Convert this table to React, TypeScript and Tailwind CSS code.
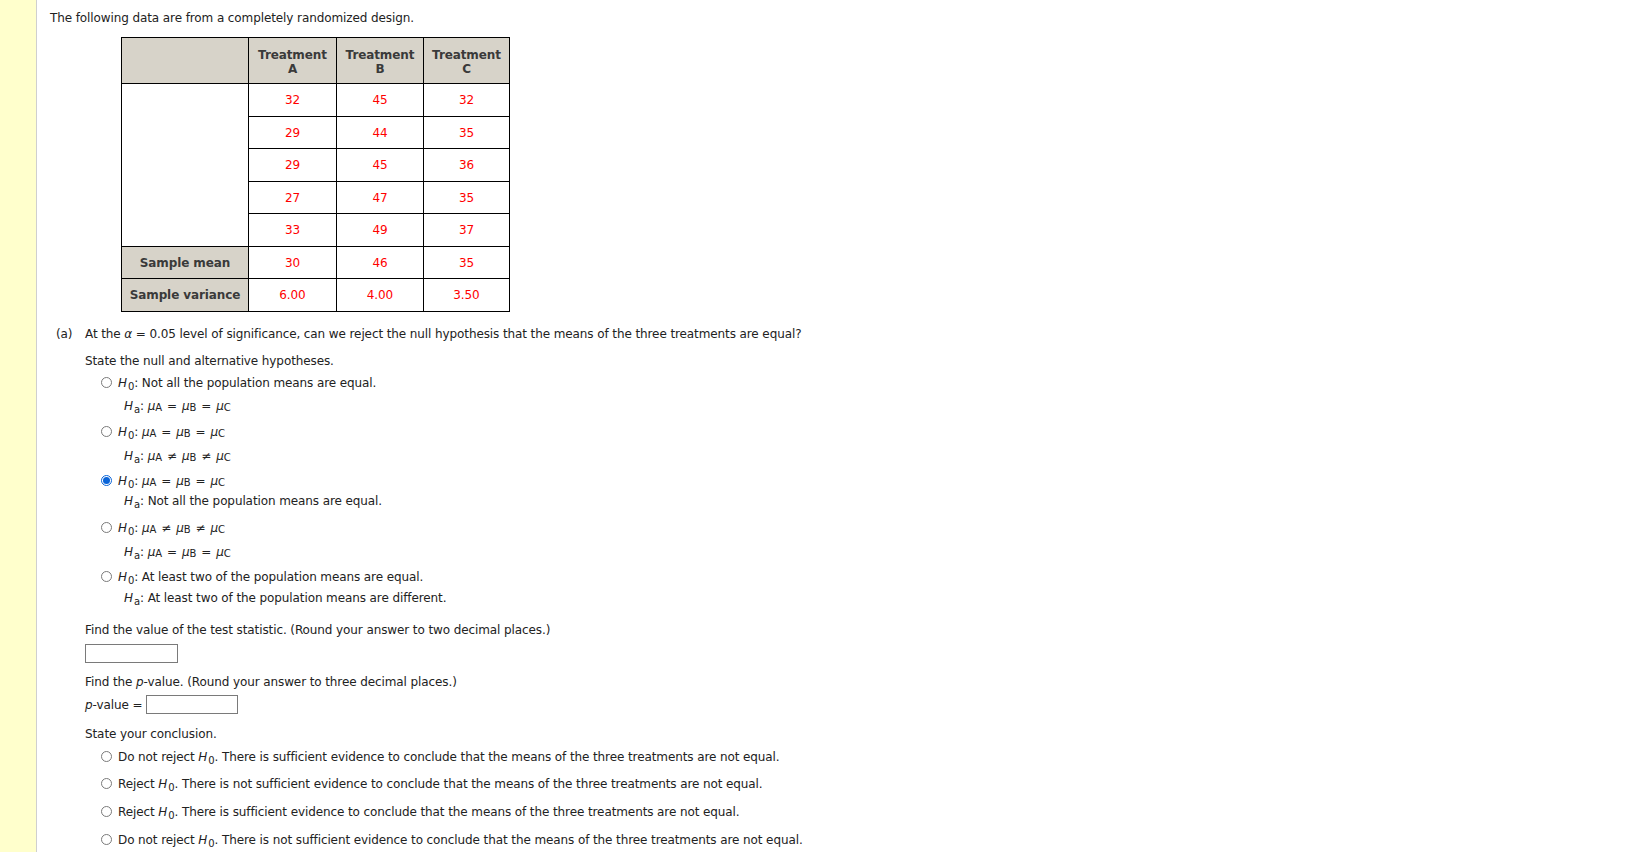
import React from 'react';

const font = { fontFamily: '"DejaVu Sans", Verdana, sans-serif' };

const rows = [
    ['32', '45', '32'],
    ['29', '44', '35'],
    ['29', '45', '36'],
    ['27', '47', '35'],
    ['33', '49', '37'],
];

function Radio({ checked = false }: { checked?: boolean }) {
    if (checked) {
        return (
            <span className="inline-flex h-[11px] w-[11px] shrink-0 items-center justify-center rounded-full border border-[#0a64d8] bg-white">
                <span className="h-[7px] w-[7px] rounded-full bg-[#0a64d8]" />
            </span>
        );
    }
    return <span className="inline-block h-[11px] w-[11px] shrink-0 rounded-full border border-[#7a7a7a] bg-white" />;
}

function H({ sub }: { sub: string }) {
    return (
        <span>
            <i>H</i>
            <sub className="relative top-[3px] ml-[1px] text-[10px]">{sub}</sub>
        </span>
    );
}

function Mu({ s }: { s: string }) {
    return (
        <span>
            <i>μ</i>
            <sub className="relative top-[1px] text-[10px]">{s}</sub>
        </span>
    );
}

function Eq({ neq = false }: { neq?: boolean }) {
    return <span className="mx-[5px]">{neq ? '≠' : '='}</span>;
}

function MuChain({ neq = false }: { neq?: boolean }) {
    return (
        <span>
            <Mu s="A" />
            <Eq neq={neq} />
            <Mu s="B" />
            <Eq neq={neq} />
            <Mu s="C" />
        </span>
    );
}

function Line({ className = '', children }: { className?: string; children: React.ReactNode }) {
    return <div className={`flex h-[20px] items-center whitespace-nowrap ${className}`}>{children}</div>;
}

export default function App() {
    return (
        <div className="flex min-h-[852px] bg-white text-[12px] tracking-[-0.1px] text-[#222]" style={font}>
            {/* yellow side strip */}
            <div className="w-[37px] shrink-0 border-r border-[#cfcfcf] bg-[#ffffcc]" />

            <div className="pl-[13px] pt-[8px]">
                <Line>The following data are from a completely randomized design.</Line>

                <table className="ml-[71px] mt-[9px] border-collapse text-center">
                    <thead>
                        <tr className="h-[46px] bg-[#d7d3c9] font-bold leading-[14px] text-[#3a3a3a]">
                            <th className="w-[127px] border border-black" />
                            <th className="w-[88px] border border-black pt-[2px]">Treatment<br />A</th>
                            <th className="w-[87px] border border-black pt-[2px]">Treatment<br />B</th>
                            <th className="w-[86px] border border-black pt-[2px]">Treatment<br />C</th>
                        </tr>
                    </thead>
                    <tbody>
                        {rows.map((r, i) => (
                            <tr key={i} className="h-[32.5px] text-[#ff0000]">
                                {i === 0 && <td rowSpan={5} className="border border-black bg-white" />}
                                {r.map((v, j) => (
                                    <td key={j} className="border border-black pt-[1px]">{v}</td>
                                ))}
                            </tr>
                        ))}
                        <tr className="h-[32.5px]">
                            <td className="border border-black bg-[#d7d3c9] pt-[1px] font-bold text-[#3a3a3a]">Sample mean</td>
                            <td className="border border-black pt-[1px] text-[#ff0000]">30</td>
                            <td className="border border-black pt-[1px] text-[#ff0000]">46</td>
                            <td className="border border-black pt-[1px] text-[#ff0000]">35</td>
                        </tr>
                        <tr className="h-[32.5px]">
                            <td className="border border-black bg-[#d7d3c9] pt-[1px] font-bold text-[#3a3a3a]">Sample variance</td>
                            <td className="border border-black pt-[1px] text-[#ff0000]">6.00</td>
                            <td className="border border-black pt-[1px] text-[#ff0000]">4.00</td>
                            <td className="border border-black pt-[1px] text-[#ff0000]">3.50</td>
                        </tr>
                    </tbody>
                </table>

                <Line className="mt-[12px] pl-[6px]">
                    <span className="w-[29px]">(a)</span>
                    <span>
                        At the <i>α</i> = 0.05 level of significance, can we reject the null hypothesis that the means of the three treatments are equal?
                    </span>
                </Line>

                <div className="pl-[35px]">
                    <Line className="mt-[7px]">State the null and alternative hypotheses.</Line>

                    {/* option 1 */}
                    <Line className="mt-[2px] pl-[16px]">
                        <Radio />
                        <span className="ml-[6px]"><H sub="0" />: Not all the population means are equal.</span>
                    </Line>
                    <Line className="mt-[3px] pl-[39px]">
                        <H sub="a" />:&nbsp;<MuChain />
                    </Line>

                    {/* option 2 */}
                    <Line className="mt-[6px] pl-[16px]">
                        <Radio />
                        <span className="ml-[6px]"><H sub="0" />:&nbsp;<MuChain /></span>
                    </Line>
                    <Line className="mt-[4px] pl-[39px]">
                        <H sub="a" />:&nbsp;<MuChain neq />
                    </Line>

                    {/* option 3 (selected) */}
                    <Line className="mt-[5px] pl-[16px]">
                        <Radio checked />
                        <span className="ml-[6px]"><H sub="0" />:&nbsp;<MuChain /></span>
                    </Line>
                    <Line className="mt-[0px] pl-[39px]">
                        <H sub="a" />: Not all the population means are equal.
                    </Line>

                    {/* option 4 */}
                    <Line className="mt-[7px] pl-[16px]">
                        <Radio />
                        <span className="ml-[6px]"><H sub="0" />:&nbsp;<MuChain neq /></span>
                    </Line>
                    <Line className="mt-[4px] pl-[39px]">
                        <H sub="a" />:&nbsp;<MuChain />
                    </Line>

                    {/* option 5 */}
                    <Line className="mt-[5px] pl-[16px]">
                        <Radio />
                        <span className="ml-[6px]"><H sub="0" />: At least two of the population means are equal.</span>
                    </Line>
                    <Line className="mt-[1px] pl-[39px]">
                        <H sub="a" />: At least two of the population means are different.
                    </Line>

                    <Line className="mt-[12px]">Find the value of the test statistic. (Round your answer to two decimal places.)</Line>
                    <input type="text" className="mt-[4px] block h-[19px] w-[93px] border border-[#7a7a7a] bg-white" />

                    <Line className="mt-[9px]">
                        Find the&nbsp;<i>p</i>-value. (Round your answer to three decimal places.)
                    </Line>
                    <Line className="mt-[3px]">
                        <span><i>p</i>-value =&nbsp;</span>
                        <input type="text" className="h-[19px] w-[92px] border border-[#7a7a7a] bg-white" />
                    </Line>

                    <Line className="mt-[9px]">State your conclusion.</Line>
                    <Line className="mt-[3px] pl-[16px]">
                        <Radio />
                        <span className="ml-[6px]">Do not reject <H sub="0" />. There is sufficient evidence to conclude that the means of the three treatments are not equal.</span>
                    </Line>
                    <Line className="mt-[7px] pl-[16px]">
                        <Radio />
                        <span className="ml-[6px]">Reject <H sub="0" />. There is not sufficient evidence to conclude that the means of the three treatments are not equal.</span>
                    </Line>
                    <Line className="mt-[8px] pl-[16px]">
                        <Radio />
                        <span className="ml-[6px]">Reject <H sub="0" />. There is sufficient evidence to conclude that the means of the three treatments are not equal.</span>
                    </Line>
                    <Line className="mt-[8px] pl-[16px]">
                        <Radio />
                        <span className="ml-[6px]">Do not reject <H sub="0" />. There is not sufficient evidence to conclude that the means of the three treatments are not equal.</span>
                    </Line>
                </div>
            </div>
        </div>
    );
}
